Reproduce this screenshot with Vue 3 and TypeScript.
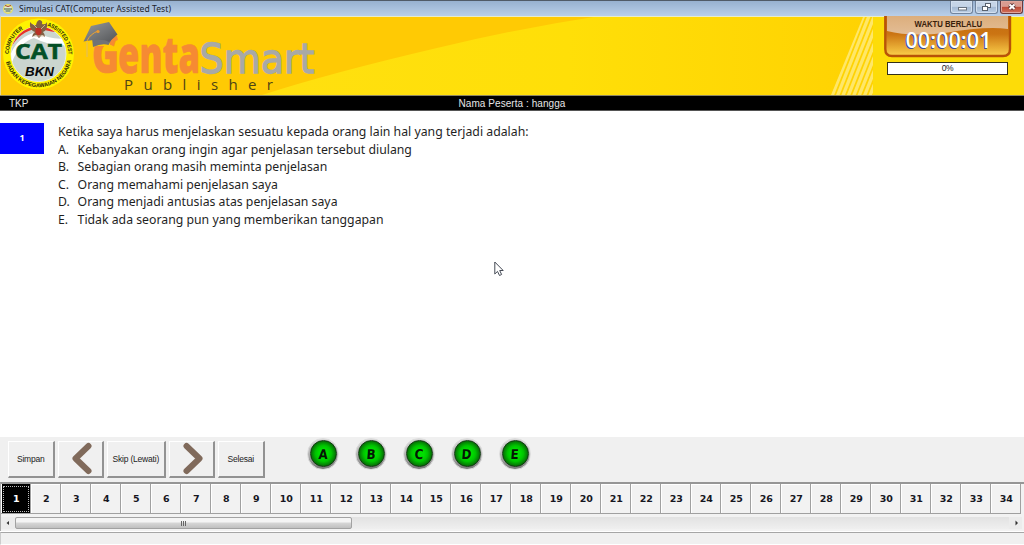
<script setup lang="ts">
import { ref } from 'vue'

interface Choice {
  key: string
  text: string
}

const question = 'Ketika saya harus menjelaskan sesuatu kepada orang lain hal yang terjadi adalah:'
const choices: Choice[] = [
  { key: 'A', text: 'Kebanyakan orang ingin agar penjelasan tersebut diulang' },
  { key: 'B', text: 'Sebagian orang masih meminta penjelasan' },
  { key: 'C', text: 'Orang memahami penjelasan saya' },
  { key: 'D', text: 'Orang menjadi antusias atas penjelasan saya' },
  { key: 'E', text: 'Tidak ada seorang pun yang memberikan tanggapan' },
]
const current = ref(1)
const total = 34
const stripes = [0, 1, 2, 3, 4, 5, 6, 7, 8, 9, 10]
</script>

<template>
  <div class="window">
    <header class="titlebar">
      <svg class="app-icon" width="12" height="12" viewBox="0 0 12 12">
        <circle cx="6" cy="6" r="5" fill="#e6df62" />
        <ellipse cx="6" cy="6" rx="3.8" ry="3.6" fill="#e3e8d5" />
        <path d="M2 6h8M3.5 8h5" stroke="#3c5d3a" stroke-width="1.2" />
        <path d="M3 2.5l3 1 3-1" stroke="#a8482c" fill="none" />
      </svg>
      <span class="title">Simulasi CAT(Computer Assisted Test)</span>
      <div class="controls">
        <span class="control">
          <svg width="22" height="12"><rect x="7.5" y="6.5" width="8" height="2.5" fill="#fff" stroke="#69727e" /></svg>
        </span>
        <span class="control">
          <svg width="22" height="12">
            <rect x="9.5" y="2.5" width="5" height="4" fill="#fff" stroke="#59626e" />
            <rect x="6.5" y="5.5" width="5" height="4" fill="#fff" stroke="#59626e" />
          </svg>
        </span>
        <span class="control close">
          <svg width="22" height="12">
            <path d="M8.5 3.5l5 4.5M13.5 3.5l-5 4.5" stroke="#5c3436" stroke-width="3.8" />
            <path d="M8.5 3.5l5 4.5M13.5 3.5l-5 4.5" stroke="#fff" stroke-width="2" />
          </svg>
        </span>
      </div>
    </header>

    <section class="banner">
      <svg class="art" width="1024" height="79" viewBox="0 16 1024 79">
        <defs>
          <linearGradient id="swoosh" x1="0" y1="0" x2="1" y2="0">
            <stop offset="0" stop-color="#ffe010" />
            <stop offset=".5" stop-color="#ffdf08" />
            <stop offset="1" stop-color="#ffd202" />
          </linearGradient>
          <linearGradient id="cap" x1="0" y1="0" x2="1" y2="1">
            <stop offset="0" stop-color="#989a9c" />
            <stop offset="1" stop-color="#535558" />
          </linearGradient>
          <linearGradient id="panel" x1="0" y1="0" x2="0" y2="1">
            <stop offset="0" stop-color="#c56c10" />
            <stop offset=".45" stop-color="#cb7413" />
            <stop offset="1" stop-color="#fbd04a" />
          </linearGradient>
          <linearGradient id="gloss" x1="0" y1="0" x2="0" y2="1">
            <stop offset="0" stop-color="#dcae7c" />
            <stop offset="1" stop-color="#e3bd96" />
          </linearGradient>
          <clipPath id="disc"><circle cx="38.5" cy="54" r="27.5" /></clipPath>
          <clipPath id="stripeArea"><path d="M863 17H873V95H831Z" /></clipPath>
          <path id="arcTop" d="M8.7 54.5A29.8 29.8 0 0 1 68.3 54.5" />
          <path id="arcBottom" d="M5.2 54A33.3 33.3 0 0 0 71.8 54" />
        </defs>
        <rect x="0" y="16" width="1024" height="79" fill="#ffca04" />
        <path d="M262 95Q330 73 437 48Q520 28 600 16H873V95Z" fill="url(#swoosh)" />
        <rect x="873" y="16" width="151" height="79" fill="#fddc08" />
        <g clip-path="url(#stripeArea)">
          <path
            v-for="n in stripes"
            :key="n"
            :d="`M${864 + n * 5.4} 15L${832 + n * 5.4} 96`"
            stroke="#ffe768"
            stroke-width="3.3"
          />
        </g>
        <path d="M0 16.5H1024" stroke="#e8eccb" />
        <path d="M.5 16V95" stroke="#e5d9a0" />

        <circle cx="38.5" cy="54" r="35.5" fill="#fff200" />
        <circle cx="38.5" cy="54" r="27.5" fill="#cbd5cf" stroke="#e8eeda" stroke-width="1" />
        <g clip-path="url(#disc)">
          <path d="M10 50Q18 32 38 28Q52 33 68 33V24H8Z" fill="#e93226" />
          <path d="M8 62Q14 38 36 32Q52 41 69 38V45Q52 47 34 38Q20 42 12 62Z" fill="#fff" />
        </g>
        <path d="M30 22q3 4 6 3q1-5 4-5q3 1 2 4q4 1 5-2q1 8-4 10q2 2 2 5l-3-2-3 3-3-3-4 2q0-3 3-5q-6-2-5-10Z" fill="#826044" />
        <path d="M35.5 28h6v5l-3 3-3-3Z" fill="#b93226" />
        <path d="M33 24l4 4M45 25l-4 4M34 36h10" stroke="#d9c5a8" stroke-width=".8" />
        <text class="seal"><textPath href="#arcTop" startOffset="0.5" textLength="30" lengthAdjust="spacingAndGlyphs">COMPUTER</textPath></text>
        <text class="seal"><textPath href="#arcTop" startOffset="55.5" textLength="38" lengthAdjust="spacingAndGlyphs">ASSISTED TEST</textPath></text>
        <text class="seal"><textPath href="#arcBottom" startOffset="8" textLength="90" lengthAdjust="spacingAndGlyphs">BADAN KEPEGAWAIAN NEGARA</textPath></text>
        <text class="cat" x="15" y="59.3" textLength="47" lengthAdjust="spacingAndGlyphs">CAT</text>
        <text class="bkn" x="25" y="75.8" textLength="29" lengthAdjust="spacingAndGlyphs">BKN</text>

        <text class="genta" x="92" y="73" font-size="49" textLength="27" lengthAdjust="spacingAndGlyphs">G</text>
        <text class="genta" x="118" y="73" font-size="52" textLength="82" lengthAdjust="spacingAndGlyphs">enta</text>
        <text class="smart" x="199.5" y="72.5" textLength="115" lengthAdjust="spacingAndGlyphs">Smart</text>
        <path d="M90 34H119V37L110 41V46H98L91 47Z" fill="#ffca04" />
        <path d="M110 42Q112 36 117 36L118 40L113 42Z" fill="#f68a33" />
        <path d="M92 38L113 37L108.5 45Q102 43 93 47Z" fill="#717376" />
        <path d="M83.5 41.5L91 26L109 22L117.5 34.5L109 42Q102 38 83.5 41.5Z" fill="url(#cap)" />
        <path d="M98 31Q90 34 87 41" fill="none" stroke="#f0a52e" stroke-width="1" />
        <circle cx="98" cy="31.5" r="1.6" fill="#ee9c2c" />
        <path d="M87 42V57" fill="none" stroke="#e9c04a" stroke-width="1.4" />
        <text class="publisher" x="124" y="90" textLength="149">Publisher</text>

        <path d="M885 16H1010V49Q1010 56 1003 56H892Q885 56 885 49Z" fill="url(#panel)" />
        <path d="M887 16H1008V29Q985 26 945 33Q910 37 887 31Z" fill="url(#gloss)" />
        <path d="M885.3 16V49Q885.3 56 892 56H1003Q1010 56 1010 49V16" fill="none" stroke="#b85308" stroke-width="2.4" />
        <text class="elapsed" x="914.5" y="27" textLength="67.5" lengthAdjust="spacingAndGlyphs">WAKTU BERLALU</text>
        <text class="clock shade" x="904.5" y="48.8" textLength="86" lengthAdjust="spacingAndGlyphs">00:00:01</text>
        <text class="clock" x="905.5" y="48" textLength="86" lengthAdjust="spacingAndGlyphs">00:00:01</text>
      </svg>
      <div class="progress">0%</div>
    </section>

    <div class="identity">
      <span>TKP</span>
      <span class="participant">Nama Peserta : hangga</span>
      <span></span>
    </div>

    <main class="question">
      <div class="number">{{ current }}</div>
      <div class="body">
        <p class="prompt">{{ question }}</p>
        <p v-for="c in choices" :key="c.key" class="choice">
          <span class="key">{{ c.key }}.</span><span class="label">{{ c.text }}</span>
        </p>
      </div>
      <svg class="cursor" width="11" height="16" viewBox="0 0 11 16">
        <path d="M.8 1V13L3.5 10.4L5.5 14.5L7.6 13.5L5.7 9.5H9.2Z" fill="#fff" stroke="#454a55" stroke-width="1" />
      </svg>
    </main>

    <section class="toolbar">
      <div class="actions">
        <button class="btn">Simpan</button>
        <button class="btn">
          <svg width="24" height="34" viewBox="0 0 24 34"><path d="M20.5 4L7.5 16.5L20.5 29" /></svg>
        </button>
        <button class="btn wide">Skip (Lewati)</button>
        <button class="btn">
          <svg width="24" height="34" viewBox="0 0 24 34"><path d="M7.5 4L20.5 16.5L7.5 29" /></svg>
        </button>
        <button class="btn">Selesai</button>
      </div>
      <div class="answers">
        <button v-for="c in choices" :key="c.key" class="answer">
          <span class="lamp"><span class="letter">{{ c.key }}</span></span>
        </button>
      </div>
    </section>

    <section class="navigator">
      <div class="cells">
        <span v-for="n in total" :key="n" class="cell" :class="{ active: n === current }" @click="current = n">{{ n }}</span>
      </div>
      <div class="scrollbar">
        <svg class="arrow" width="13" height="12"><path d="M7 4v4l-2.5-2z" fill="#333" /></svg>
        <div class="track"><div class="thumb"><i></i><i></i><i></i></div></div>
        <svg class="arrow" width="13" height="12"><path d="M6.5 3.5v5l2.5-2.5z" fill="#333" /></svg>
      </div>
    </section>
    <footer class="status"></footer>
  </div>
</template>

<style>
body {
  margin: 0;
  overflow: hidden;
}
</style>

<style scoped>
.window {
  display: flex;
  flex-direction: column;
  box-sizing: border-box;
  width: 1024px;
  height: 545px;
  background: #fff;
  font-family: "Liberation Sans", Arial, sans-serif;
  overflow: hidden;
}
.titlebar {
  display: flex;
  align-items: center;
  box-sizing: border-box;
  height: 16px;
  padding-left: 2px;
  border-top: 1px solid #505b68;
  background: linear-gradient(#97b1d0, #b9cfe9);
}
.app-icon {
  margin-right: 5px;
}
.title {
  flex: 1;
  font: 8.6px/14px "Noto Sans", sans-serif;
  letter-spacing: .03px;
  color: #1b222b;
  white-space: nowrap;
}
.controls {
  display: flex;
  align-self: flex-start;
  gap: 2px;
  padding-right: 1px;
}
.control {
  display: flex;
  justify-content: center;
  box-sizing: border-box;
  width: 23px;
  height: 13px;
  border: 1px solid #71849d;
  border-top: 0;
  border-radius: 0 0 3px 3px;
  background: linear-gradient(#c6d5e7 45%, #a4b9d2 50%, #bdd0e6);
  box-shadow: inset 0 0 0 1px #d3e0ef;
}
.control.close {
  border-color: #6b3a3e;
  background: linear-gradient(#d99b90 45%, #bd4a36 50%, #d2715b);
  box-shadow: inset 0 0 0 1px #dfa59b;
}
.banner {
  position: relative;
  height: 79px;
}
.art {
  display: block;
}
.seal {
  font: bold 5.6px "Liberation Sans", sans-serif;
  fill: #29290b;
}
.cat {
  font: bold 22px "Open Sans", sans-serif;
  fill: #034f26;
  stroke: #034f26;
  stroke-width: .6;
}
.bkn {
  font: italic bold 13.5px "Liberation Sans", sans-serif;
  fill: #080808;
}
.genta {
  font-family: "Open Sans", sans-serif;
  font-weight: 800;
  fill: #f68a33;
  stroke: #f68a33;
  stroke-width: .5;
}
.smart {
  font: 40px "DejaVu Sans", sans-serif;
  fill: #a8a9a6;
  stroke: #a8a9a6;
  stroke-width: 1.3;
}
.publisher {
  font: 15px "Open Sans", sans-serif;
  fill: #4e4415;
}
.elapsed {
  font: bold 8.5px "Liberation Sans", sans-serif;
  fill: #38200b;
}
.clock {
  font: 600 21.5px "Open Sans", sans-serif;
  fill: #fff;
}
.clock.shade {
  fill: #394a9a;
}
.progress {
  position: absolute;
  top: 46px;
  left: 887px;
  box-sizing: border-box;
  width: 121px;
  height: 13px;
  border: 1px solid #333018;
  background: #fff;
  font-size: 8.5px;
  line-height: 11px;
  letter-spacing: -.4px;
  text-align: center;
  color: #222;
}
.identity {
  display: grid;
  grid-template-columns: 1fr auto 1fr;
  box-sizing: border-box;
  height: 16px;
  padding: 0 9px;
  border-top: 1px solid #8d8762;
  border-bottom: 1px solid #555;
  background: #000;
  color: #e6e6e6;
  font-size: 10px;
  line-height: 15px;
}
.participant {
  letter-spacing: .06px;
}
.question {
  position: relative;
  display: flex;
  align-items: flex-start;
  box-sizing: border-box;
  height: 326px;
  padding-top: 12px;
}
.number {
  width: 44px;
  height: 31px;
  margin-right: 13.5px;
  background: #00f;
  color: #fff;
  font: bold 9px/30px "Open Sans", sans-serif;
  text-align: center;
}
.body {
  padding-top: .3px;
  font: 13.3px/17.55px "Noto Sans", sans-serif;
  color: #1f1f1f;
  white-space: nowrap;
  transform: scaleX(.923);
  transform-origin: 0 0;
}
.body p {
  margin: 0;
}
.choice {
  display: flex;
}
.key {
  width: 21.2px;
}
.cursor {
  position: absolute;
  top: 150px;
  left: 494px;
}
.toolbar {
  display: flex;
  box-sizing: border-box;
  height: 45px;
  padding: 4px 0 0 8px;
  background: #f0f0f0;
}
.actions {
  display: flex;
  gap: 3px;
}
.btn {
  display: flex;
  align-items: center;
  justify-content: center;
  box-sizing: border-box;
  width: 46.5px;
  height: 37px;
  margin: 0;
  padding: 0;
  border: 1px solid #fff;
  border-right: 2px solid #929292;
  border-bottom: 2px solid #929292;
  background: #f0f0f0;
  color: #222;
  font: 8.5px "Liberation Sans", sans-serif;
  letter-spacing: -.2px;
  white-space: nowrap;
}
.btn.wide {
  width: 58.5px;
}
.btn path {
  fill: none;
  stroke: #806a5b;
  stroke-width: 6;
  stroke-linecap: round;
  stroke-linejoin: round;
}
.answers {
  display: flex;
  gap: 16px;
  margin: -3.5px 0 0 42.5px;
}
.answer {
  display: flex;
  align-items: center;
  justify-content: center;
  box-sizing: border-box;
  width: 32px;
  height: 32px;
  padding: 0;
  border: 1px solid #ddd;
  border-radius: 50%;
  background: linear-gradient(#d9d9d9, #b5b5b5 50%, #777);
}
.lamp {
  display: flex;
  align-items: center;
  justify-content: center;
  box-sizing: border-box;
  width: 27px;
  height: 27px;
  border: 1px solid #123d12;
  border-radius: 50%;
  background: radial-gradient(circle, #00df00 25%, #00c400 45%, #067006 70%);
}
.letter {
  font: bold 13.5px/14px "DejaVu Sans", sans-serif;
  color: #041704;
  transform: skewX(-4deg) scaleX(.88);
}
.navigator {
  box-sizing: border-box;
  height: 49px;
  padding: 0 2px 0 0;
  border-top: 2px solid #969696;
  border-left: 1px solid #aaa;
  background: #f2f2f2;
}
.cells {
  display: flex;
  height: 30px;
}
.cell {
  box-sizing: border-box;
  flex: none;
  width: 30px;
  height: 30px;
  border: solid #a0a0a0;
  border-width: 0 1px 1px 0;
  box-shadow: inset 1px 1px 0 #fff;
  color: #17171f;
  font: bold 9.5px/30px "DejaVu Sans", sans-serif;
  text-align: center;
  padding-left: 1.6px;
}
.cell.active {
  background: #000;
  color: #fff;
  outline: 1px dotted #bbb;
  outline-offset: -3px;
  box-shadow: inset 1px 0 0 #fff;
}
.scrollbar {
  display: flex;
  height: 12px;
  margin-top: 3px;
  padding-left: 1px;
  background: #ececec;
}
.arrow {
  flex: none;
}
.track {
  flex: 1;
  background: linear-gradient(#e2e2e2, #efefef);
}
.thumb {
  display: flex;
  align-items: center;
  justify-content: center;
  gap: 1px;
  box-sizing: border-box;
  width: 337px;
  height: 12px;
  border: 1px solid #a2a2a2;
  border-radius: 2px;
  background: linear-gradient(#f4f4f4 40%, #d6d6d6 50%, #c0c0c0);
}
.thumb i {
  width: 1px;
  height: 5px;
  background: #666;
}
.status {
  box-sizing: border-box;
  height: 13px;
  margin-top: 1px;
  border-top: 1px solid #a6a6a6;
  border-bottom: 1px solid #fff;
  border-left: 1px solid #ccc;
  background: #f0f0f0;
}
</style>
